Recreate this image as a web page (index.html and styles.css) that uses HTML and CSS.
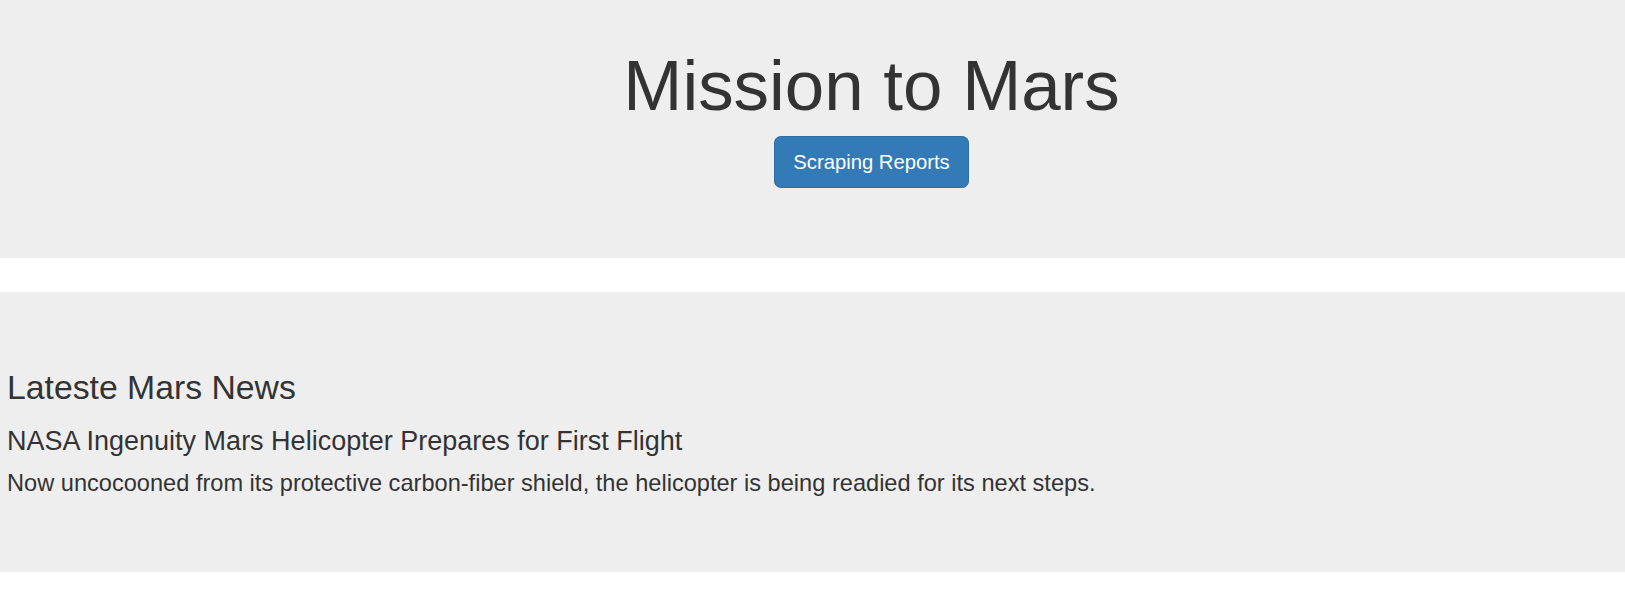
FILE: index.html
```html
<!DOCTYPE html>
<html lang="en">
<head>
<meta charset="utf-8">
<title>Mission to Mars</title>
<link rel="stylesheet" href="styles.css">
</head>
<body>
  <header class="hero">
    <h1 class="hero-title">Mission to Mars</h1>
    <a class="btn-primary" href="#">Scraping Reports</a>
  </header>
  <section class="news">
    <h2 class="news-heading">Lateste Mars News</h2>
    <h3 class="news-title">NASA Ingenuity Mars Helicopter Prepares for First Flight</h3>
    <p class="news-lead">Now uncocooned from its protective carbon-fiber shield, the helicopter is being readied for its next steps.</p>
  </section>
</body>
</html>
```

FILE: styles.css
```css
html, body {
  margin: 0;
  padding: 0;
}
body {
  background: #fff;
  color: #333;
  font-family: "Liberation Sans", Arial, sans-serif;
  font-size: 15.75px;
}
.hero {
  background: #eee;
  display: flex;
  flex-direction: column;
  align-items: center;
  padding: 47px 0 70px 118px;
  margin-bottom: 34px;
}
.hero-title {
  margin: 0 0 11px;
  font-size: 70.9px;
  font-weight: 400;
  line-height: 78px;
}
.btn-primary {
  display: inline-block;
  box-sizing: border-box;
  height: 52px;
  padding: 11px 18px;
  font-size: 20.25px;
  line-height: 28px;
  color: #fff;
  text-decoration: none;
  background: #337ab7;
  border: 1px solid #2e6da4;
  border-radius: 6.75px;
}
.news {
  background: #eee;
  padding: 54px 7px 55px;
}
.news-heading {
  margin: 23px 0 0;
  font-size: 33.75px;
  font-weight: 400;
  line-height: 37.1px;
}
.news-title {
  margin: 20.5px 0 10.25px;
  font-size: 27px;
  font-weight: 400;
  line-height: 29.7px;
}
.news-lead {
  margin: 0 0 16.9px;
  font-size: 23.6px;
  line-height: 33.75px;
  font-weight: 300;
}
```
